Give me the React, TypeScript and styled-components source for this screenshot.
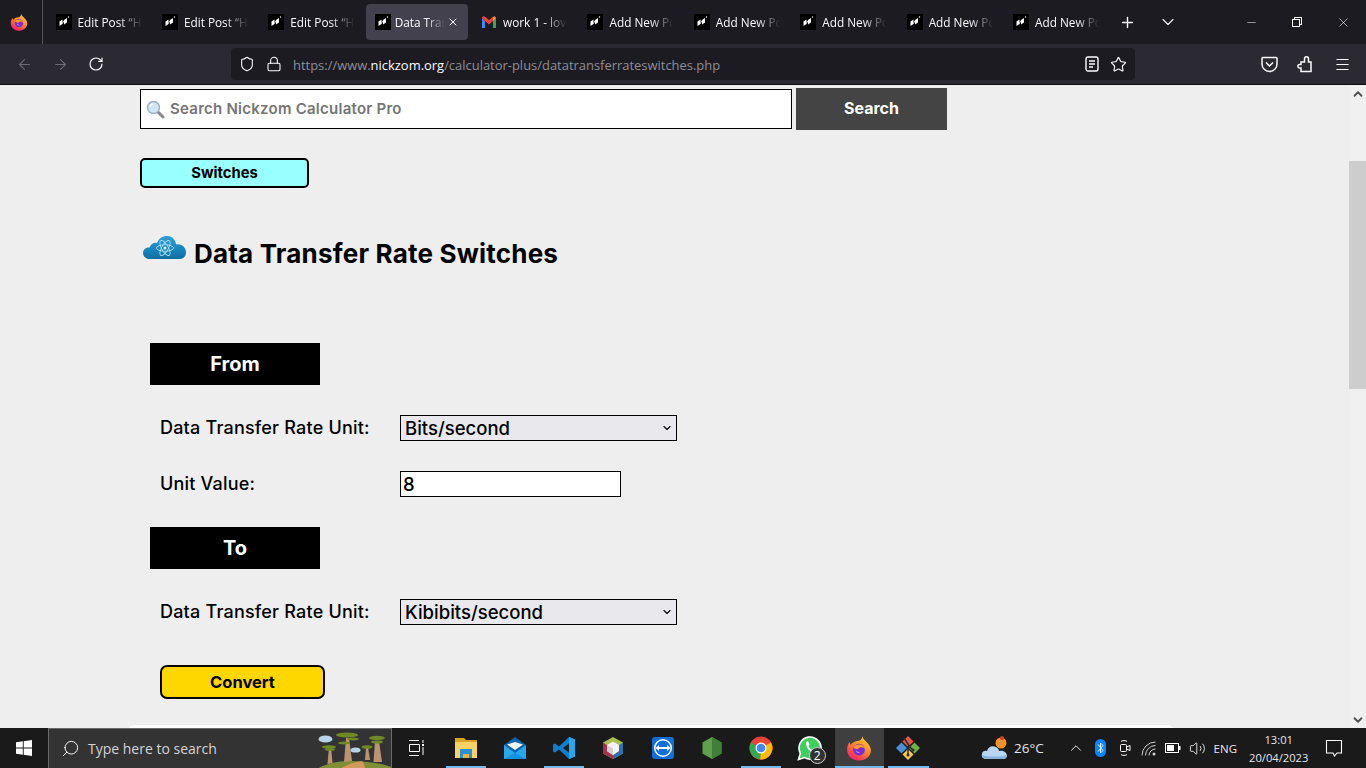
import React from 'react';
import styled, { createGlobalStyle } from 'styled-components';
import {
  ArrowLeft,
  ArrowRight,
  ChevronDown,
  ChevronUp,
  Lock,
  Menu,
  Minus,
  Plus,
  RotateCw,
  Search as SearchGlyph,
  Shield,
  Star,
  Volume2,
  X,
} from 'lucide-react';

const GlobalStyle = createGlobalStyle`
  html, body {
    margin: 0;
    padding: 0;
    overflow: hidden;
  }

  * {
    box-sizing: border-box;
  }
`;

const uiFont = `'Open Sans', 'Noto Sans', sans-serif`;
const pageFont = `Inter, 'Noto Sans', sans-serif`;

const TABS = [
  { title: 'Edit Post “H' },
  { title: 'Edit Post “H' },
  { title: 'Edit Post “H' },
  { title: 'Data Tran', active: true },
  { title: 'work 1 - lov', gmail: true },
  { title: 'Add New Po' },
  { title: 'Add New Po' },
  { title: 'Add New Po' },
  { title: 'Add New Po' },
  { title: 'Add New Po' },
];

const FirefoxLogo = ({ size }: { size: number }) => (
  <svg width={size} height={size} viewBox="0 0 24 24">
    <defs>
      <linearGradient id="foxBody" x1="0.8" y1="0" x2="0.2" y2="1">
        <stop offset="0" stopColor="#ffd02e" />
        <stop offset="0.45" stopColor="#ff8a2a" />
        <stop offset="1" stopColor="#f5156c" />
      </linearGradient>
    </defs>
    <path
      d="M15 1c.5 2.500 2 3.500 3.500 5C21 8.500 23 11 23 14c0 5-4.500 9.500-11 9.500S1 19 1 13.500C1 10.500 2 8 3.500 6.500c0 1 .3 2 1 2.500C6 6.500 8.500 5.500 11 5.500c2 0 4-1.500 4-4.500z"
      fill="url(#foxBody)"
    />
    <circle cx="12" cy="13.5" r="5.5" fill="#7b2ccf" />
    <path d="M6.500 11.500c2-3 7-4 10-1 .8.800 1.300 1.800 1.500 3-1.500-2-3.500-2.500-5-2-1 .3-1.500.8-2 1.500-1.500 0-3.200-.5-4.500-1.500z" fill="#ff9a2e" />
    <path d="M9 14c1 1.500 3 2 4.500 1.500-1 1.500-4 1.500-4.500-1.500z" fill="#c9a6f5" />
  </svg>
);

const SiteFavicon = () => (
  <svg width="16" height="16" viewBox="0 0 16 16">
    <rect width="16" height="16" fill="#000" />
    <path d="M3.500 12V7.500L6.500 5.500V10zM8 10.500V6L11 4V8.500z" fill="#fff" />
    <path d="M6.500 9.500 8 6.500" stroke="#fff" strokeWidth="0.8" />
    <circle cx="12.5" cy="3" r="0.7" fill="#fff" />
  </svg>
);

const GmailFavicon = () => (
  <svg width="16" height="16" viewBox="0 0 16 16">
    <path d="M1 4v10h3V7z" fill="#4285f4" />
    <path d="M15 4v10h-3V7z" fill="#34a853" />
    <path d="M1 4c0-1.800 2-2.300 3-1.300L8 6l4-3.300c1-1 3-.5 3 1.300L12 7 8 10.500 4 7z" fill="#ea4335" />
    <path d="M12 2.700 15 4l-3 3z" fill="#fbbc04" />
  </svg>
);

const SearchEmoji = () => (
  <svg width="19" height="19" viewBox="0 0 19 19">
    <path d="M11 11l6 6" stroke="#8a8a8a" strokeWidth="3" strokeLinecap="round" />
    <circle cx="7.5" cy="7.5" r="6" fill="#cfe6f5" stroke="#9fb0bd" strokeWidth="1.5" />
    <path d="M4 7c.3-1.800 1.500-3 3.200-3.200" stroke="#fff" strokeWidth="1.3" fill="none" />
  </svg>
);

const CloudAtom = () => (
  <svg width="43" height="25" viewBox="0 0 43 25">
    <defs>
      <linearGradient id="cloudFill" x1="0" y1="0" x2="0" y2="1">
        <stop offset="0" stopColor="#2f9fd6" />
        <stop offset="0.6" stopColor="#1784bd" />
        <stop offset="1" stopColor="#0f6d9f" />
      </linearGradient>
    </defs>
    <path
      d="M7 24C3 24 0 21.500 0 18c0-3.500 3-6 6.500-5.500C8 9 11 7 14 8c2-5 6-7.500 11-7 4.500.5 7.500 4 8 8.500 5-1 10 2.500 10 8 0 4-3 6.500-7 6.500z"
      fill="url(#cloudFill)"
    />
    <g fill="none" stroke="#a9dcf3" strokeWidth="0.9">
      <ellipse cx="22" cy="13" rx="8.5" ry="3.3" />
      <ellipse cx="22" cy="13" rx="8.5" ry="3.3" transform="rotate(60 22 13)" />
      <ellipse cx="22" cy="13" rx="8.5" ry="3.3" transform="rotate(120 22 13)" />
    </g>
    <circle cx="22" cy="13" r="1.5" fill="#d9f1fb" />
  </svg>
);

const Landscape = () => (
  <svg width="74" height="40" viewBox="0 0 74 40">
    <path d="M0 40c8-5 20-8 32-8 16 0 32 2 42 6v2z" fill="#7f8f35" />
    <path d="M23 40c6-4 14-7 22-8 2 3 3 5 3 8z" fill="#d49a5c" />
    <g fill="#b9966f">
      <path d="M10.500 35l1.500-17h2l1.500 16z" />
      <path d="M27 33l2-24h3l3 23z" />
      <path d="M48 31l1-13h2l2 13z" />
      <path d="M56.500 33l1.500-21h4l3 21z" />
    </g>
    <g fill="#6f8a25">
      <ellipse cx="12" cy="18" rx="7" ry="1.8" />
      <ellipse cx="13" cy="20.5" rx="5" ry="1.3" />
      <ellipse cx="30" cy="6" rx="11" ry="2.6" />
      <ellipse cx="27" cy="14" rx="6" ry="1.5" />
      <ellipse cx="36" cy="10" rx="6" ry="1.5" />
      <ellipse cx="50" cy="18" rx="5.5" ry="1.8" />
      <ellipse cx="60" cy="9" rx="8" ry="2.2" />
      <ellipse cx="60" cy="13" rx="6" ry="1.6" />
    </g>
    <ellipse cx="8.5" cy="10" rx="7" ry="3.6" fill="#b4d4ea" />
    <ellipse cx="38.5" cy="21" rx="5" ry="2.6" fill="#b4d4ea" />
  </svg>
);

const FilesIcon = () => (
  <svg width="24" height="24" viewBox="0 0 24 24">
    <path d="M1 2h9l2 2h11v18H1z" fill="#d9a520" />
    <path d="M1 6h22v16H1z" fill="#fad165" />
    <path d="M6 13h12v9h-3v-4H9v4H6z" fill="#2b8fd6" />
    <path d="M9 18h6v4H9z" fill="#f2b632" />
  </svg>
);

const MailIcon = () => (
  <svg width="24" height="24" viewBox="0 0 24 24">
    <path d="M12 1 23 9v14H1V9z" fill="#0a64ad" />
    <path d="M4 8.500 12 6l8 2.500-8 5.500z" fill="#f2f2f2" />
    <path d="M1 9l11 8 11-8v14H1z" fill="#28a8ea" />
    <path d="M1 23 12 17l11 6z" fill="#1490df" />
  </svg>
);

const CodeIcon = () => (
  <svg width="24" height="24" viewBox="0 0 24 24">
    <path d="M17 1 7 10.500 3 7.500 1 8.500v7l2 1 4-3 10 9.500 6-2.500V3.500zM17 7.500v9L11 12z" fill="#0f7fcc" />
    <path d="M17 1l6 2.500v17L17 23V16.500 7.500z" fill="#2aa5f0" />
  </svg>
);

const BoxIcon = () => (
  <svg width="24" height="24" viewBox="0 0 24 24">
    <path d="M12 1 22 6.500v11L12 23 2 17.500v-11z" fill="#a9c04f" />
    <path d="M2 6.500v11L12 23v-4L6 15V9z" fill="#a8324e" />
    <path d="M22 6.500v11L12 23v-4l6-4V9z" fill="#2f6fb0" />
    <path d="M6 9 12 5.500 18 9v6l-6 4-6-4z" fill="#f4f4f4" />
    <path d="M6 9l6 3.500V19l-6-4z" fill="#cfcfd6" />
  </svg>
);

const TeamViewerIcon = () => (
  <svg width="24" height="24" viewBox="0 0 24 24">
    <rect x="1" y="1" width="22" height="22" rx="3" fill="#0e6fd8" />
    <circle cx="12" cy="12" r="9" fill="#fff" />
    <circle cx="12" cy="12" r="7.5" fill="#0e6fd8" />
    <path d="M4.500 12 8 9v2h8V9l3.500 3-3.500 3v-2H8v2z" fill="#fff" />
  </svg>
);

const NodeIcon = () => (
  <svg width="24" height="24" viewBox="0 0 24 24">
    <path d="M12 1 21.500 6.500v11L12 23 2.500 17.500v-11z" fill="#5fa04e" />
    <path d="M12 1 21.500 6.500v11L12 23z" fill="#3f7f3a" />
  </svg>
);

const ChromeIcon = () => (
  <svg width="24" height="24" viewBox="0 0 24 24">
    <circle cx="12" cy="12" r="11.5" fill="#ea4335" />
    <path d="M12 12 22 6.500A11.500 11.500 0 0 1 11 23.500z" fill="#fbbc04" />
    <path d="M12 12 11 23.500A11.500 11.500 0 0 1 2 6.500z" fill="#34a853" />
    <circle cx="12" cy="12" r="5.5" fill="#fff" />
    <circle cx="12" cy="12" r="4.3" fill="#4285f4" />
  </svg>
);

const WhatsAppIcon = () => (
  <svg width="26" height="26" viewBox="0 0 26 26">
    <path d="M1.500 24.500l1.800-6.300a11 11 0 1 1 4.300 4.400z" fill="#3ecf5e" stroke="#fff" strokeWidth="1.6" />
    <path
      d="M9 7c1-1 2-1 2.500 0l1 2.500-1 1.500c1 2 2 3 4 4l1.500-1 2.500 1c1 1 0 2.500-1 3-4 1-11-6-9-11z"
      fill="#fff"
    />
  </svg>
);

const GitIcon = () => (
  <svg width="26" height="26" viewBox="0 0 26 26">
    <path d="M13 1 18.500 6.500 13 12 7.500 6.500z" fill="#e2574c" />
    <path d="M1 13 6.500 7.500 12 13 6.500 18.500z" fill="#4a90d9" />
    <path d="M25 13 19.500 7.500 14 13 19.500 18.500z" fill="#6fb04a" />
    <path d="M13 25 7.500 19.500 13 14 18.500 19.500z" fill="#f2c94c" />
    <path d="M9 3l6 9 3 3M13 11v9" stroke="#2b2b2b" strokeWidth="1.5" fill="none" />
    <circle cx="13" cy="20" r="1.5" fill="#2b2b2b" />
    <circle cx="18" cy="15" r="1.5" fill="#2b2b2b" />
  </svg>
);

const WeatherIcon = () => (
  <svg width="28" height="26" viewBox="0 0 28 26">
    <circle cx="20" cy="8" r="5.5" fill="#f0932b" />
    <circle cx="21" cy="3" r="2" fill="#d63b1f" />
    <path d="M6 24c-4 0-6-2-5-5 0-2 2-4 5-3 1-4 5-6 9-4 2 1 3 3 3 4 5-1 8 2 8 5 0 2-2 3-4 3z" fill="#b9d6f2" />
    <path d="M1 20c6 2 18 2 25 0 0 2-2 4-4 4H6c-3 0-5-2-5-4z" fill="#8ab4de" />
  </svg>
);

const WindowsLogo = () => (
  <svg width="16" height="16" viewBox="0 0 16 16">
    <path d="M0 2.300 6.800 1.300v6.200H0zM7.700 1.200 16 0v7.500H7.700zM0 8.400h6.800v6.300L0 13.700zM7.700 8.400H16V16l-8.300-1.200z" fill="#fff" />
  </svg>
);

const TaskViewIcon = () => (
  <svg width="17" height="16" viewBox="0 0 17 16" fill="none" stroke="#fff" strokeWidth="1">
    <path d="M1 .5h10M1 15.500h10M1.500 4.500h10v7h-10zM15 0v3M15 7v8" />
    <rect x="14" y="4" width="2" height="2" fill="#fff" stroke="none" />
  </svg>
);

const PocketIcon = () => (
  <svg width="17" height="17" viewBox="0 0 17 17" fill="none" stroke="#fbfbfe" strokeWidth="1.5">
    <path d="M2 1.500h13a1 1 0 0 1 1 1V8a7.500 7.500 0 0 1-15 0V2.500a1 1 0 0 1 1-1z" />
    <path d="M5 6.500 8.500 10 12 6.500" />
  </svg>
);

const ExtensionIcon = () => (
  <svg width="18" height="18" viewBox="0 0 18 18" fill="none" stroke="#fbfbfe" strokeWidth="1.5">
    <path d="M4 16.500h10V7h-2.500V3.700a2 2 0 0 0-4 0V7H4v2.500H2.700a1.800 1.800 0 0 0 0 3.600H4z" />
  </svg>
);

const ReaderIcon = () => (
  <svg width="14" height="16" viewBox="0 0 14 16" fill="none" stroke="#fbfbfe" strokeWidth="1.4">
    <rect x="1" y="1" width="12" height="14" rx="2" />
    <path d="M4 5h6M4 8h6M4 11h4" />
  </svg>
);

const BatteryIcon = () => (
  <svg width="16" height="12" viewBox="0 0 16 12" fill="none">
    <rect x="0.5" y="1.5" width="13" height="9" stroke="#fff" />
    <rect x="2" y="3" width="7" height="6" fill="#fff" />
    <rect x="14" y="4" width="1.5" height="4" fill="#fff" />
  </svg>
);

const BluetoothBadge = () => (
  <svg width="11" height="18" viewBox="0 0 11 18">
    <rect width="11" height="18" rx="5.5" fill="#0a84ff" />
    <path d="M3 5.500 8 11.500 5.500 14V4L8 6.500 3 12.500" fill="none" stroke="#fff" strokeWidth="0.9" />
  </svg>
);

const MeetIcon = () => (
  <svg width="12" height="18" viewBox="0 0 12 18" fill="none" stroke="#fff" strokeWidth="1">
    <rect x="1.5" y="5.5" width="6" height="7" rx="1" />
    <path d="M7.500 8 11 6.500v5L7.500 10M2 2.500c1-1.200 5-1.200 6 0M2 15.500c1 1.200 5 1.200 6 0" />
  </svg>
);

const WifiIcon = () => (
  <svg width="15" height="15" viewBox="0 0 15 15" fill="none" stroke="#d0d0d0" strokeWidth="1">
    <path d="M1 14.500A13.500 13.500 0 0 1 14.500 1M4.500 14.500a10 10 0 0 1 10-10M8 14.500a6.500 6.500 0 0 1 6.500-6.500" />
    <circle cx="13" cy="13" r="1.5" fill="#d0d0d0" stroke="none" />
  </svg>
);

const NotifyIcon = () => (
  <svg width="18" height="18" viewBox="0 0 18 18" fill="none" stroke="#fff" strokeWidth="1.1">
    <path d="M1.500 1.500h15v12.500h-4.500L9.500 17 8 14H1.500z" />
  </svg>
);

const App = () => (
  <Screen>
    <GlobalStyle />
    <TabStrip>
      <FirefoxButton>
        <FirefoxLogo size={18} />
      </FirefoxButton>
      <Tabs>
        {TABS.map((tab, i) => (
          <Tab key={i} $active={tab.active}>
            {tab.gmail ? <GmailFavicon /> : <SiteFavicon />}
            <TabTitle $active={tab.active}>{tab.title}</TabTitle>
            {tab.active && <X size={12} color="#fbfbfe" />}
          </Tab>
        ))}
      </Tabs>
      <StripAction>
        <Plus size={17} color="#fbfbfe" />
      </StripAction>
      <ListAction>
        <ChevronDown size={20} color="#fbfbfe" strokeWidth={1.3} />
      </ListAction>
      <WindowControls>
        <WindowButton>
          <Minus size={13} color="#fff" strokeWidth={1} />
        </WindowButton>
        <WindowButton>
          <RestoreBack />
          <RestoreFront />
        </WindowButton>
        <WindowButton>
          <X size={15} color="#fff" strokeWidth={1} />
        </WindowButton>
      </WindowControls>
    </TabStrip>

    <NavBar>
      <NavButton>
        <ArrowLeft size={17} color="#6d6d73" strokeWidth={1.5} />
      </NavButton>
      <NavButton>
        <ArrowRight size={17} color="#6d6d73" strokeWidth={1.5} />
      </NavButton>
      <NavButton>
        <RotateCw size={16} color="#fbfbfe" strokeWidth={1.8} />
      </NavButton>
      <UrlBar>
        <Shield size={16} color="#fbfbfe" strokeWidth={1.6} />
        <Lock size={16} color="#fbfbfe" strokeWidth={1.6} />
        <UrlText>
          https://www.<UrlHost>nickzom.org</UrlHost>/calculator-plus/datatransferrateswitches.php
        </UrlText>
        <ReaderIcon />
        <Star size={17} color="#fbfbfe" strokeWidth={1.6} />
      </UrlBar>
      <NavTools>
        <PocketIcon />
        <ExtensionIcon />
        <Menu size={17} color="#fbfbfe" strokeWidth={1.6} />
      </NavTools>
    </NavBar>

    <Viewport>
      <Page>
        <SearchRow>
          <SearchBox>
            <SearchEmoji />
            <SearchPlaceholder>Search Nickzom Calculator Pro</SearchPlaceholder>
          </SearchBox>
          <SearchButton>Search</SearchButton>
        </SearchRow>
        <SwitchesButton>Switches</SwitchesButton>
        <TitleRow>
          <CloudHolder>
            <CloudAtom />
          </CloudHolder>
          <Title>Data Transfer Rate Switches</Title>
        </TitleRow>
        <SectionBar $top={72}>From</SectionBar>
        <FieldRow $top={30}>
          <FieldLabel>Data Transfer Rate Unit:</FieldLabel>
          <SelectBox>
            Bits/second
            <ChevronDown size={12} color="#000" strokeWidth={2.2} />
          </SelectBox>
        </FieldRow>
        <FieldRow $top={30}>
          <FieldLabel>Unit Value:</FieldLabel>
          <ValueBox>8</ValueBox>
        </FieldRow>
        <SectionBar $top={30}>To</SectionBar>
        <FieldRow $top={30}>
          <FieldLabel>Data Transfer Rate Unit:</FieldLabel>
          <SelectBox>
            Kibibits/second
            <ChevronDown size={12} color="#000" strokeWidth={2.2} />
          </SelectBox>
        </FieldRow>
        <ConvertButton>Convert</ConvertButton>
        <WhitePanel />
      </Page>
      <Scrollbar>
        <ScrollArrow>
          <ChevronUp size={14} color="#505050" strokeWidth={3.2} />
        </ScrollArrow>
        <ScrollTrack>
          <ScrollThumb />
        </ScrollTrack>
        <ScrollArrow>
          <ChevronDown size={14} color="#505050" strokeWidth={3.2} />
        </ScrollArrow>
      </Scrollbar>
    </Viewport>

    <Taskbar>
      <StartButton>
        <WindowsLogo />
      </StartButton>
      <TaskSearch>
        <MirroredSearch>
          <SearchGlyph size={19} color="#fff" strokeWidth={1.2} />
        </MirroredSearch>
        <TaskSearchText>Type here to search</TaskSearchText>
        <Landscape />
      </TaskSearch>
      <TaskIcon>
        <TaskViewIcon />
      </TaskIcon>
      <TaskIcon $running>
        <FilesIcon />
      </TaskIcon>
      <TaskIcon>
        <MailIcon />
      </TaskIcon>
      <TaskIcon $running>
        <CodeIcon />
      </TaskIcon>
      <TaskIcon>
        <BoxIcon />
      </TaskIcon>
      <TaskIcon>
        <TeamViewerIcon />
      </TaskIcon>
      <TaskIcon>
        <NodeIcon />
      </TaskIcon>
      <TaskIcon $running>
        <ChromeIcon />
      </TaskIcon>
      <TaskIcon>
        <WhatsAppIcon />
        <CountBadge>2</CountBadge>
      </TaskIcon>
      <TaskIcon $running $active>
        <FirefoxLogo size={26} />
      </TaskIcon>
      <TaskIcon $running>
        <GitIcon />
      </TaskIcon>
      <Weather>
        <WeatherIcon />
        <WeatherText>26°C</WeatherText>
      </Weather>
      <Tray>
        <TrayItem>
          <ChevronUp size={18} color="#fff" strokeWidth={1.2} />
        </TrayItem>
        <TrayItem>
          <BluetoothBadge />
        </TrayItem>
        <TrayItem>
          <MeetIcon />
        </TrayItem>
        <TrayItem>
          <WifiIcon />
        </TrayItem>
        <TrayItem>
          <BatteryIcon />
        </TrayItem>
        <TrayItem>
          <Volume2 size={17} color="#fff" strokeWidth={1.2} />
        </TrayItem>
        <TrayText>ENG</TrayText>
      </Tray>
      <Clock>
        <span>13:01</span>
        <span>20/04/2023</span>
      </Clock>
      <Notify>
        <NotifyIcon />
      </Notify>
    </Taskbar>
  </Screen>
);

const Screen = styled.div`
  display: flex;
  flex-direction: column;
  width: 1366px;
  height: 768px;
  overflow: hidden;
  background-color: #eee;
`;

const TabStrip = styled.div`
  display: flex;
  align-items: center;
  height: 44px;
  flex-shrink: 0;
  background-color: #1c1b22;
`;

const FirefoxButton = styled.div`
  display: flex;
  align-items: center;
  justify-content: center;
  width: 43px;
  height: 44px;
  padding-right: 4px;
  border-right: 1px solid #55555a;
`;

const Tabs = styled.div`
  display: flex;
  align-items: center;
  margin-left: 3.5px;
`;

const Tab = styled.div<{ $active?: boolean }>`
  display: flex;
  align-items: center;
  width: 102px;
  height: 36px;
  margin-right: 4.4px;
  padding-left: 9px;
  border-radius: 4px;
  background-color: ${({ $active }) => ($active ? '#42414d' : 'transparent')};
`;

const TabTitle = styled.span<{ $active?: boolean }>`
  width: ${({ $active }) => ($active ? '52px' : '70px')};
  margin-left: ${({ $active }) => ($active ? '4px' : '6px')};
  overflow: hidden;
  white-space: nowrap;
  color: #fbfbfe;
  font-family: ${uiFont};
  font-size: 11.8px;
  -webkit-mask-image: linear-gradient(
    to right,
    #000 ${({ $active }) => ($active ? '60%' : '58%')},
    transparent ${({ $active }) => ($active ? '96%' : '92%')}
  );
  mask-image: linear-gradient(
    to right,
    #000 ${({ $active }) => ($active ? '60%' : '58%')},
    transparent ${({ $active }) => ($active ? '96%' : '92%')}
  );
`;

const StripAction = styled.div`
  display: flex;
  justify-content: center;
  width: 30px;
  margin-left: 2px;
`;

const ListAction = styled.div`
  display: flex;
  justify-content: center;
  width: 30px;
  margin-left: 11px;
`;

const WindowControls = styled.div`
  display: flex;
  margin-left: auto;
`;

const WindowButton = styled.div`
  position: relative;
  display: flex;
  align-items: center;
  justify-content: center;
  width: 46px;
  height: 44px;
`;

const RestoreBack = styled.span`
  position: absolute;
  top: 17px;
  left: 20px;
  width: 8px;
  height: 8px;
  border: 1px solid #fff;
`;

const RestoreFront = styled.span`
  position: absolute;
  top: 19px;
  left: 18px;
  width: 8px;
  height: 8px;
  border: 1px solid #fff;
  background-color: #1c1b22;
`;

const NavBar = styled.div`
  display: flex;
  align-items: center;
  height: 41px;
  flex-shrink: 0;
  padding-left: 6px;
  border-bottom: 1px solid #0c0c0d;
  background-color: #2b2a33;
`;

const NavButton = styled.div`
  display: flex;
  align-items: center;
  justify-content: center;
  width: 36px;
  height: 32px;
`;

const UrlBar = styled.div`
  display: flex;
  align-items: center;
  gap: 11px;
  width: 904px;
  height: 32px;
  margin-left: 117px;
  padding: 0 8px;
  border-radius: 4px;
  background-color: #1c1b22;
`;

const UrlText = styled.span`
  flex: 1;
  padding-top: 2px;
  color: #8f8f96;
  font-family: ${uiFont};
  font-size: 12.95px;
`;

const UrlHost = styled.span`
  color: #fbfbfe;
`;

const NavTools = styled.div`
  display: flex;
  align-items: center;
  gap: 19px;
  margin-left: 126px;
`;

const Viewport = styled.div`
  display: flex;
  height: 643px;
  flex-shrink: 0;
  overflow: hidden;
`;

const Page = styled.div`
  position: relative;
  flex: 1;
  padding: 3px 0 0 140px;
  overflow: hidden;
  background-color: #eee;
  font-family: ${pageFont};
`;

const SearchRow = styled.div`
  display: flex;
  align-items: center;
  gap: 4px;
`;

const SearchBox = styled.div`
  display: flex;
  align-items: center;
  gap: 5px;
  width: 652px;
  height: 40px;
  padding-left: 5px;
  border: 1.5px solid #000;
  background-color: #fff;
`;

const SearchPlaceholder = styled.span`
  padding-bottom: 1px;
  color: #757575;
  font-size: 15px;
  font-weight: 600;
  letter-spacing: 0.25px;
`;

const SearchButton = styled.div`
  display: flex;
  align-items: center;
  justify-content: center;
  width: 151px;
  height: 42px;
  padding-bottom: 2px;
  background-color: #444;
  color: #fff;
  font-size: 16px;
  font-weight: 700;
`;

const SwitchesButton = styled.div`
  display: flex;
  align-items: center;
  justify-content: center;
  width: 169px;
  height: 30px;
  margin-top: 28px;
  border: 2px solid #000;
  border-radius: 5px;
  background-color: #9ff;
  color: #000;
  font-size: 14.8px;
  font-weight: 700;
`;

const TitleRow = styled.div`
  display: flex;
  align-items: center;
  gap: 8px;
  height: 36px;
  margin-top: 47px;
  padding-left: 3px;
`;

const CloudHolder = styled.div`
  display: flex;
  margin-bottom: 11px;
`;

const Title = styled.h1`
  margin: 0;
  color: #000;
  font-size: 26px;
  font-weight: 700;
  letter-spacing: 0.2px;
`;

const SectionBar = styled.div<{ $top: number }>`
  display: flex;
  align-items: center;
  justify-content: center;
  width: 170px;
  height: 42px;
  margin: ${({ $top }) => $top}px 0 0 10px;
  background-color: #000;
  color: #fff;
  font-size: 20px;
  font-weight: 700;
`;

const FieldRow = styled.div<{ $top: number }>`
  display: flex;
  align-items: center;
  height: 26px;
  margin: ${({ $top }) => $top}px 0 0 20px;
`;

const FieldLabel = styled.span`
  width: 240px;
  padding-bottom: 1px;
  color: #000;
  font-size: 18px;
  font-weight: 500;
  letter-spacing: 0.2px;
`;

const SelectBox = styled.div`
  display: flex;
  align-items: center;
  justify-content: space-between;
  width: 277px;
  height: 26px;
  padding: 0 3px 0 4px;
  border: 1px solid #000;
  background-color: #e9e9ed;
  color: #000;
  font-size: 18.5px;
  font-weight: 500;
`;

const ValueBox = styled.div`
  display: flex;
  align-items: center;
  width: 221px;
  height: 26px;
  padding-left: 2px;
  border: 1px solid #000;
  background-color: #fff;
  color: #000;
  font-size: 18.5px;
  font-weight: 500;
`;

const ConvertButton = styled.div`
  display: flex;
  align-items: center;
  justify-content: center;
  width: 165px;
  height: 34px;
  margin: 40px 0 0 20px;
  border: 2px solid #000;
  border-radius: 7px;
  background-color: #ffd700;
  color: #000;
  font-size: 16.5px;
  font-weight: 700;
`;

const WhitePanel = styled.div`
  position: absolute;
  top: 640px;
  left: 127px;
  width: 1048px;
  height: 40px;
  border-radius: 8px 8px 0 0;
  background-color: #fff;
`;

const Scrollbar = styled.div`
  display: flex;
  flex-direction: column;
  width: 17px;
  flex-shrink: 0;
  background-color: #f0f0f0;
`;

const ScrollArrow = styled.div`
  display: flex;
  align-items: center;
  justify-content: center;
  height: 17px;
`;

const ScrollTrack = styled.div`
  flex: 1;
  padding-top: 59px;
`;

const ScrollThumb = styled.div`
  height: 228px;
  background-color: #cdcdcd;
`;

const Taskbar = styled.div`
  display: flex;
  align-items: center;
  height: 40px;
  flex-shrink: 0;
  background-color: #1a1a1a;
`;

const StartButton = styled.div`
  display: flex;
  align-items: center;
  justify-content: center;
  width: 48px;
  height: 40px;
`;

const TaskSearch = styled.div`
  display: flex;
  align-items: center;
  width: 344px;
  height: 40px;
  padding-left: 12px;
  border: 1px solid #6b6b6b;
  border-bottom-width: 0;
  background-color: #333;
`;

const MirroredSearch = styled.div`
  display: flex;
  transform: scaleX(-1);
`;

const TaskSearchText = styled.span`
  flex: 1;
  margin-left: 8px;
  color: #d4d4d4;
  font-family: ${uiFont};
  font-size: 14px;
`;

const TaskIcon = styled.div<{ $running?: boolean; $active?: boolean }>`
  position: relative;
  display: flex;
  align-items: center;
  justify-content: center;
  width: 49.2px;
  height: 40px;
  background-color: ${({ $active }) => ($active ? '#3f3f3f' : 'transparent')};

  &::after {
    content: '';
    display: ${({ $running }) => ($running ? 'block' : 'none')};
    position: absolute;
    bottom: 0;
    left: ${({ $active }) => ($active ? '0' : '4.5px')};
    right: ${({ $active }) => ($active ? '0' : '4.5px')};
    height: 2px;
    background-color: #76b9ed;
  }
`;

const CountBadge = styled.span`
  position: absolute;
  right: 9px;
  bottom: 4px;
  width: 17px;
  height: 17px;
  border: 1px solid #ccc;
  border-radius: 50%;
  background-color: #333;
  color: #fff;
  font-family: ${uiFont};
  font-size: 12px;
  line-height: 15px;
  text-align: center;
`;

const Weather = styled.div`
  display: flex;
  align-items: center;
  gap: 5px;
  margin-left: 48px;
`;

const WeatherText = styled.span`
  color: #e6e6e6;
  font-family: ${uiFont};
  font-size: 13.5px;
`;

const Tray = styled.div`
  display: flex;
  align-items: center;
  margin-left: 20px;
`;

const TrayItem = styled.div`
  display: flex;
  align-items: center;
  justify-content: center;
  width: 24.3px;
`;

const TrayText = styled.span`
  margin-left: 4px;
  color: #e6e6e6;
  font-family: ${uiFont};
  font-size: 11.5px;
`;

const Clock = styled.div`
  display: flex;
  flex-direction: column;
  align-items: center;
  gap: 3px;
  margin-left: 12px;
  color: #e6e6e6;
  font-family: ${uiFont};
  font-size: 11.2px;
  line-height: 15px;
`;

const Notify = styled.div`
  display: flex;
  justify-content: center;
  width: 38px;
  margin-left: 7px;
`;

export default App;
